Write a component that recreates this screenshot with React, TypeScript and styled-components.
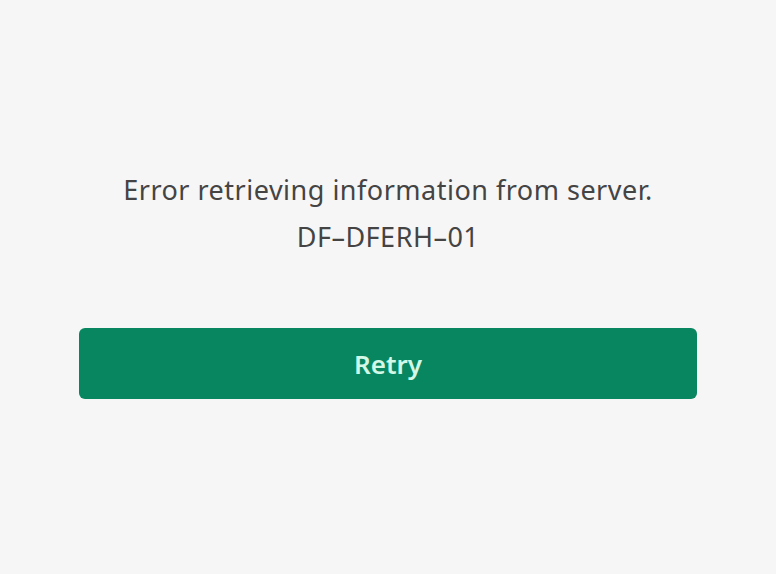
import React from 'react'
import styled, { createGlobalStyle } from 'styled-components'

const GlobalStyle = createGlobalStyle`
  html, body {
    margin: 0;
    padding: 0;
    background: #f7f6f6;
  }
`

const Screen = styled.div`
  box-sizing: border-box;
  height: 574px;
  padding: 166px 79px 0 79px;
  display: flex;
  flex-direction: column;
  align-items: stretch;
  font-family: 'Noto Sans', 'Open Sans', sans-serif;
  font-variant-ligatures: none;
`

const Message = styled.p`
  margin: 0;
  text-align: center;
  font-size: 27px;
  line-height: 47px;
  letter-spacing: 0.5px;
  color: #444;
`

const RetryButton = styled.button`
  margin-top: 68px;
  height: 71px;
  border: none;
  border-radius: 6px;
  background: #088660;
  color: #d3f8e6;
  font-family: inherit;
  font-size: 26px;
  font-weight: 600;
  cursor: pointer;
`

export default function App() {
  return (
    <>
      <GlobalStyle />
      <Screen>
        <Message>
          Error retrieving information from server.
          <br />
          DF–DFERH–01
        </Message>
        <RetryButton>Retry</RetryButton>
      </Screen>
    </>
  )
}
